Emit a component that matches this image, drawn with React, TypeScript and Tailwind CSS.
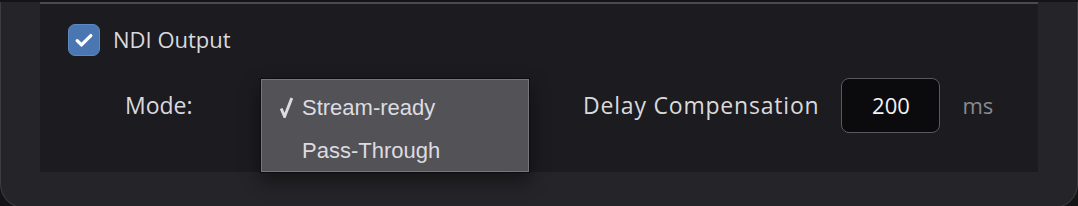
const uiFont = { fontFamily: '"Open Sans", "Noto Sans", sans-serif' };
const menuFont = { fontFamily: '"Liberation Sans", Arial, sans-serif' };

function Checkbox() {
  return (
    <div className="w-[32px] h-[32px] rounded-[7px] bg-[#4a76b2] border border-[#5d88c2] flex items-center justify-center">
      <svg width="22" height="22" viewBox="0 0 20 20" fill="none">
        <path d="M3.8 10.6l3.9 3.9L16.2 6" stroke="#ffffff" strokeWidth="3" strokeLinecap="round" strokeLinejoin="round" />
      </svg>
    </div>
  );
}

function MenuCheck() {
  return (
    <svg width="13" height="21" viewBox="0 0 13 21" fill="none">
      <path d="M1.2 11.5L4.6 19.5L11.8 1" stroke="#dcdce0" strokeWidth="2.9" strokeLinejoin="miter" />
    </svg>
  );
}

function ModeMenu() {
  return (
    <div
      className="absolute left-[220px] top-[74px] w-[270px] h-[95px] border border-[#0e0e10] shadow-[0_8px_18px_rgba(0,0,0,0.45)]"
      style={menuFont}
    >
      <div className="w-full h-full bg-[#535257] border border-[#77767c] flex flex-col pt-[10px] text-[22px] text-[#dcdce0]">
        <div className="flex items-center h-[34px]">
          <span className="w-[40px] pl-[18px] flex items-center">
            <MenuCheck />
          </span>
          <span>Stream-ready</span>
        </div>
        <div className="flex items-center h-[44px] pt-[8px] pl-[40px]">Pass-Through</div>
      </div>
    </div>
  );
}

export default function App() {
  return (
    <div className="w-[1078px] h-[206px] bg-[#141416] overflow-hidden">
      <div className="h-[206px] bg-[#252428] border-x border-b border-[#3c3b40] rounded-b-[24px] px-[39px]">
        <div className="relative h-[170px] bg-[#1c1b1f] border-t-2 border-[#4b4a50] mt-[2px]" style={uiFont}>
          <div className="flex items-center gap-[13px] pl-[28px] pt-[19px]">
            <Checkbox />
            <span className="text-[22px] text-[#d9d9dd]">NDI Output</span>
          </div>
          <div className="flex items-center pl-[85px] mt-[22px] h-[55px] text-[23px] text-[#d9d9dd]">
            <span className="w-[458px]">Mode:</span>
            <span className="tracking-[0.8px]">Delay Compensation</span>
            <div className="ml-[22px] w-[99px] h-[55px] rounded-[8px] bg-[#0b0a0d] border border-[#5a595f] flex items-center justify-center text-[22px] text-[#f2f2f4]">
              200
            </div>
            <span className="ml-[22px] text-[22px] text-[#8a898f]">ms</span>
          </div>
          <ModeMenu />
        </div>
      </div>
    </div>
  );
}
